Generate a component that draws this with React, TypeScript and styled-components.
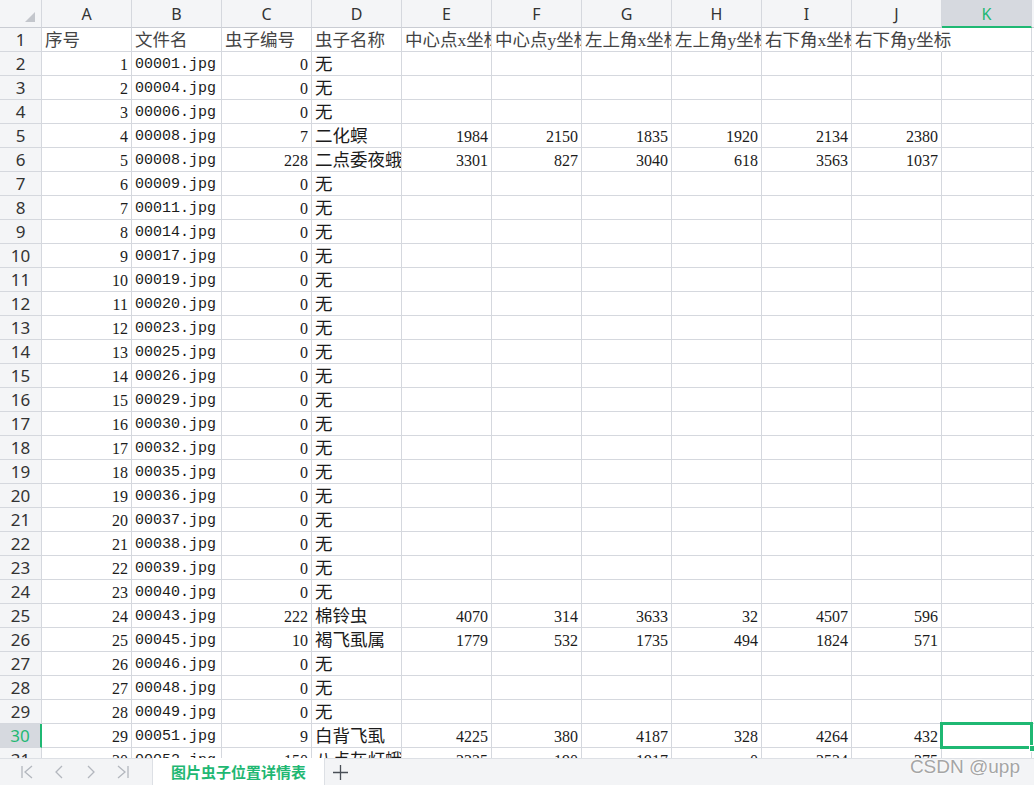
import React from "react";
import styled, { createGlobalStyle } from "styled-components";

const GREEN = "#1fb873";
const LINE = "#d5d8de";
const HEAD_BG = "#f4f5f7";

const GlobalStyle = createGlobalStyle`
  html, body {
    margin: 0;
    padding: 0;
    background: #fff;
  }
`;

type Row = (string | number)[];

const title: Row = [
  "序号",
  "文件名",
  "虫子编号",
  "虫子名称",
  "中心点x坐标",
  "中心点y坐标",
  "左上角x坐标",
  "左上角y坐标",
  "右下角x坐标",
  "右下角y坐标",
];

const empties = [
  [6, "00009"],
  [7, "00011"],
  [8, "00014"],
  [9, "00017"],
  [10, "00019"],
  [11, "00020"],
  [12, "00023"],
  [13, "00025"],
  [14, "00026"],
  [15, "00029"],
  [16, "00030"],
  [17, "00032"],
  [18, "00035"],
  [19, "00036"],
  [20, "00037"],
  [21, "00038"],
  [22, "00039"],
  [23, "00040"],
] as const;

const data: Row[] = [
  [1, "00001.jpg", 0, "无"],
  [2, "00004.jpg", 0, "无"],
  [3, "00006.jpg", 0, "无"],
  [4, "00008.jpg", 7, "二化螟", 1984, 2150, 1835, 1920, 2134, 2380],
  [5, "00008.jpg", 228, "二点委夜蛾", 3301, 827, 3040, 618, 3563, 1037],
  ...empties.map(([n, f]) => [n, `${f}.jpg`, 0, "无"]),
  [24, "00043.jpg", 222, "棉铃虫", 4070, 314, 3633, 32, 4507, 596],
  [25, "00045.jpg", 10, "褐飞虱属", 1779, 532, 1735, 494, 1824, 571],
  [26, "00046.jpg", 0, "无"],
  [27, "00048.jpg", 0, "无"],
  [28, "00049.jpg", 0, "无"],
  [29, "00051.jpg", 9, "白背飞虱", 4225, 380, 4187, 328, 4264, 432],
  [30, "00052.jpg", 150, "八点灰灯蛾", 2325, 190, 1917, 0, 2534, 375],
];

const letters = ["A", "B", "C", "D", "E", "F", "G", "H", "I", "J", "K", "L"];

const Sheet = styled.div`
  position: relative;
  width: 1034px;
  height: 785px;
  overflow: hidden;
  display: flex;
  flex-direction: column;
  background: #fff;
`;

const GridArea = styled.div`
  height: 758px;
  overflow: hidden;
`;

const Grid = styled.div`
  display: grid;
  grid-template-columns: 42px repeat(12, 90px);
  grid-template-rows: 28px;
  grid-auto-rows: 24px;
  background: #fff;
`;

const Corner = styled.div`
  box-sizing: border-box;
  background: ${HEAD_BG};
  border-right: 1px solid ${LINE};
  border-bottom: 1px solid #c9ccd3;
  display: flex;
  align-items: flex-end;
  justify-content: flex-end;
  padding: 0 6px 5px 0;
`;

const Triangle = styled.span`
  width: 0;
  height: 0;
  border-left: 10px solid transparent;
  border-bottom: 10px solid #c3c6cc;
`;

const ColHead = styled.div<{ $active?: boolean }>`
  box-sizing: border-box;
  background: ${(p) => (p.$active ? "#d6d9df" : HEAD_BG)};
  border-right: 1px solid ${LINE};
  border-bottom: ${(p) => (p.$active ? `2px solid ${GREEN}` : "1px solid #c9ccd3")};
  display: flex;
  align-items: center;
  justify-content: center;
  padding-top: 1px;
  font-family: "Noto Sans", "Liberation Sans", sans-serif;
  font-size: 16px;
  color: ${(p) => (p.$active ? GREEN : "#333")};
`;

const RowHead = styled.div<{ $active?: boolean }>`
  box-sizing: border-box;
  background: ${(p) => (p.$active ? "#d6d9df" : HEAD_BG)};
  border-right: ${(p) => (p.$active ? `2px solid ${GREEN}` : `1px solid ${LINE}`)};
  border-bottom: 1px solid ${LINE};
  display: flex;
  align-items: center;
  justify-content: center;
  font-family: "Noto Sans", "Liberation Sans", sans-serif;
  font-size: 17px;
  color: ${(p) => (p.$active ? GREEN : "#333")};
`;

const Cell = styled.div<{
  $num?: boolean;
  $mono?: boolean;
  $spill?: boolean;
  $title?: boolean;
  $selected?: boolean;
}>`
  position: relative;
  box-sizing: border-box;
  height: 24px;
  border-right: 1px solid ${(p) => (p.$spill ? "transparent" : LINE)};
  border-bottom: 1px solid ${LINE};
  padding: 2px 3px 0 3px;
  line-height: 21px;
  white-space: nowrap;
  overflow: ${(p) => (p.$spill || p.$selected ? "visible" : "hidden")};
  text-align: ${(p) => (p.$num ? "right" : "left")};
  font-family: ${(p) =>
    p.$mono
      ? '"Liberation Mono", "Noto Sans CJK SC", monospace'
      : '"Liberation Serif", "Noto Sans CJK SC", serif'};
  font-size: ${(p) => (p.$mono ? "15px" : p.$num ? "16px" : "17.5px")};
  color: ${(p) => (p.$title ? "#444" : "#1b1b1b")};
  z-index: ${(p) => (p.$selected ? 2 : p.$spill ? 1 : 0)};

  ${(p) =>
    p.$selected &&
    `
    &::after {
      content: "";
      position: absolute;
      top: -2px;
      left: -2px;
      right: -2px;
      bottom: -2px;
      border: 3px solid ${GREEN};
    }
    &::before {
      content: "";
      position: absolute;
      right: -5px;
      bottom: -5px;
      width: 5px;
      height: 5px;
      background: ${GREEN};
      border: 1px solid #fff;
      z-index: 1;
    }
  `}
`;

const TabBar = styled.div`
  box-sizing: border-box;
  height: 27px;
  display: flex;
  align-items: stretch;
  background: #f3f4f6;
  border-top: 1px solid #dde0e5;
`;

const NavGroup = styled.div`
  display: flex;
  align-items: center;
  gap: 18px;
  padding: 0 22px 0 20px;
`;

const NavIcon = styled.svg`
  width: 14px;
  height: 14px;
  stroke: #b3b7be;
  stroke-width: 1.3;
  fill: none;
`;

const Tab = styled.div`
  width: 173px;
  box-sizing: border-box;
  margin-top: -1px;
  background: #fff;
  border-left: 1px solid #dde0e5;
  border-right: 1px solid #dde0e5;
  display: flex;
  align-items: center;
  justify-content: center;
  font-family: "Noto Sans CJK SC", sans-serif;
  font-weight: 700;
  font-size: 15px;
  color: ${GREEN};
`;

const AddButton = styled.div`
  width: 30px;
  display: flex;
  align-items: center;
  justify-content: center;
`;

const Watermark = styled.div`
  position: absolute;
  right: 14px;
  bottom: 7px;
  font-family: "Liberation Sans", Arial, sans-serif;
  font-size: 19px;
  color: #a5a5a5;
  text-shadow: 0 0 2px #fff, 0 0 2px #fff;
  pointer-events: none;
`;

const renderRow = (values: Row, rowNo: number, isTitle = false) => {
  const cells = [];
  for (let c = 0; c < 12; c++) {
    const v = values[c];
    const num = typeof v === "number";
    cells.push(
      <Cell
        key={c}
        $num={num}
        $mono={c === 1 && !isTitle}
        $title={isTitle}
        $spill={isTitle && c === 9}
        $selected={rowNo === 30 && c === 10}
      >
        {v ?? ""}
      </Cell>
    );
  }
  return (
    <React.Fragment key={rowNo}>
      <RowHead $active={rowNo === 30}>{rowNo}</RowHead>
      {cells}
    </React.Fragment>
  );
};

export default function App() {
  return (
    <>
      <GlobalStyle />
      <Sheet>
        <GridArea>
          <Grid>
            <Corner>
              <Triangle />
            </Corner>
            {letters.map((l) => (
              <ColHead key={l} $active={l === "K"}>
                {l}
              </ColHead>
            ))}
            {renderRow(title, 1, true)}
            {data.map((r, i) => renderRow(r, i + 2))}
          </Grid>
        </GridArea>
        <TabBar>
          <NavGroup>
            <NavIcon viewBox="0 0 14 14">
              <path d="M2 1v12M12 1L5 7l7 6" />
            </NavIcon>
            <NavIcon viewBox="0 0 14 14">
              <path d="M10 1L4 7l6 6" />
            </NavIcon>
            <NavIcon viewBox="0 0 14 14">
              <path d="M4 1l6 6-6 6" />
            </NavIcon>
            <NavIcon viewBox="0 0 14 14">
              <path d="M2 1l7 6-7 6M12 1v12" />
            </NavIcon>
          </NavGroup>
          <Tab>图片虫子位置详情表</Tab>
          <AddButton>
            <svg width="17" height="17" viewBox="0 0 17 17">
              <path d="M8.5 1v15M1 8.5h15" stroke="#4a4f57" strokeWidth="1.3" />
            </svg>
          </AddButton>
        </TabBar>
        <Watermark>CSDN @upp</Watermark>
      </Sheet>
    </>
  );
}
